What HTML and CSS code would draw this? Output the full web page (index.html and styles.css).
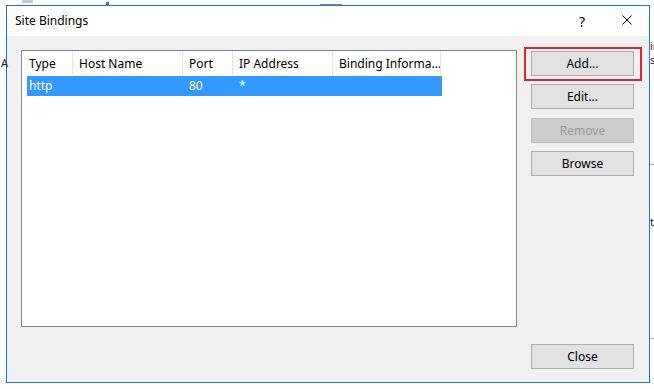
FILE: index.html
```html
<!DOCTYPE html>
<html>
<head>
<meta charset="utf-8">
<link rel="stylesheet" href="styles.css">
</head>
<body>
<div class="desk">
  <span class="bg bg-a">A</span>
  <span class="bg bg-in">in</span>
  <span class="bg bg-s">s</span>
  <span class="bg bg-te">te</span>
  <span class="bgline bgline-1"></span>
  <span class="bgline bgline-2"></span>
  <span class="bgtop bgtop-1"></span>
  <span class="bgtop bgtop-2"></span>
  <span class="bgtop bgtop-3"></span>

  <div class="window">
    <div class="titlebar">
      <span class="title">Site Bindings</span>
      <span class="help">?</span>
      <span class="close-x">
        <svg width="10" height="10" viewBox="0 0 10 10"><path d="M0.5 0.5 L9.5 9.5 M9.5 0.5 L0.5 9.5" stroke="#000" stroke-width="1" fill="none"/></svg>
      </span>
    </div>
    <div class="content">
      <div class="list">
        <div class="hdr">
          <div class="hc c1">Type</div>
          <div class="hc c2">Host Name</div>
          <div class="hc c3">Port</div>
          <div class="hc c4">IP Address</div>
          <div class="hc c5">Binding Informa...</div>
        </div>
        <div class="row sel">
          <div class="rc r1">http</div>
          <div class="rc r2"></div>
          <div class="rc r3">80</div>
          <div class="rc r4">*</div>
          <div class="rc r5"></div>
        </div>
      </div>
      <div class="buttons">
        <div class="btn-wrap">
          <button class="btn">Add...</button>
          <span class="highlight"></span>
        </div>
        <button class="btn">Edit...</button>
        <button class="btn disabled">Remove</button>
        <button class="btn">Browse</button>
        <button class="btn close-btn">Close</button>
      </div>
    </div>
  </div>
</div>
</body>
</html>
```
FILE: styles.css
```css
html, body {
  margin: 0;
  padding: 0;
  background: #ffffff;
}
body {
  font-family: "Noto Sans", "Open Sans", sans-serif;
  font-size: 12px;
  color: #000;
}
.desk {
  position: relative;
  width: 654px;
  height: 389px;
  padding: 5px 0 0 6px;
  box-sizing: border-box;
  overflow: hidden;
}
.bg {
  position: absolute;
  font-size: 11px;
  color: #1a1a3a;
  line-height: 11px;
}
.bg-a { left: 1px; top: 57px; }
.bg-in { left: 650px; top: 40px; color: #5a1020; }
.bg-s { left: 650px; top: 54px; }
.bg-te { left: 650px; top: 216px; }
.bgline {
  position: absolute;
  left: 650px;
  width: 6px;
  height: 1px;
  background: #9cb8e0;
}
.bgline-1 { top: 164px; }
.bgline-2 { top: 338px; }
.bgtop {
  position: absolute;
  top: 2px;
  height: 3px;
}
.bgtop-1 { left: 22px; width: 11px; background: #c8c8c8; top: 0; }
.bgtop-2 { left: 106px; width: 3px; background: #2b7bd6; }
.bgtop-3 { left: 320px; width: 22px; background: #8a8a8a; height: 1px; top: 4px; }

.window {
  width: 644px;
  height: 378px;
  box-sizing: border-box;
  border: 1px solid #1a7bd4;
  background: #f0f0f0;
  display: flex;
  flex-direction: column;
}
.titlebar {
  height: 30px;
  background: #ffffff;
  display: flex;
  align-items: center;
  padding: 0 0 0 8px;
}
.title {
  flex: 1;
  font-size: 12px;
  margin-top: -1px;
}
.help {
  font-size: 14px;
  margin-right: 37px;
  margin-top: 0;
}
.close-x {
  width: 10px;
  height: 10px;
  margin-right: 17px;
  margin-top: -2px;
  display: flex;
}
.content {
  flex: 1;
  display: grid;
  grid-template-columns: 496px 103px;
  column-gap: 14px;
  padding: 14px 14px 13px 14px;
}
.list {
  height: 277px;
  box-sizing: border-box;
  border: 1px solid #828790;
  background: #ffffff;
}
.hdr {
  display: flex;
  height: 24px;
  margin-bottom: 1px;
}
.hc {
  box-sizing: border-box;
  border-right: 1px solid #e5e5e5;
  padding-left: 6px;
  padding-top: 1px;
  line-height: 23px;
  white-space: nowrap;
  overflow: hidden;
}
.c1 { width: 51px; padding-left: 7px; }
.c2 { width: 110px; }
.c3 { width: 50px; }
.c4 { width: 100px; }
.c5 { width: 108px; }
.row {
  display: flex;
  height: 20px;
  margin-left: 5px;
  width: 415px;
}
.sel {
  background: #3399ff;
  color: #ffffff;
}
.rc {
  box-sizing: border-box;
  line-height: 19px;
  padding-left: 6px;
  white-space: nowrap;
}
.r1 { width: 46px; padding-left: 2px; }
.r2 { width: 110px; }
.r3 { width: 50px; }
.r4 { width: 100px; }
.r5 { flex: 1; }

.buttons {
  display: flex;
  flex-direction: column;
  gap: 8px;
  padding-top: 1px;
}
.btn-wrap {
  position: relative;
  display: flex;
}
.btn {
  width: 103px;
  height: 25px;
  box-sizing: border-box;
  border: 1px solid #adadad;
  background: #e1e1e1;
  font-family: "Noto Sans", "Open Sans", sans-serif;
  font-size: 12px;
  color: #000;
  padding: 0;
  margin: 0;
  line-height: 22px;
}
.buttons > .btn:nth-child(3) { margin-top: 1px; }
.disabled {
  background: #cccccc;
  border-color: #bfbfbf;
  color: #9a9a9a;
}
.highlight {
  position: absolute;
  left: -7px;
  top: -4px;
  right: -8px;
  bottom: -5px;
  border: 2px solid #e3262c;
}
.close-btn {
  margin-top: auto;
}
```
